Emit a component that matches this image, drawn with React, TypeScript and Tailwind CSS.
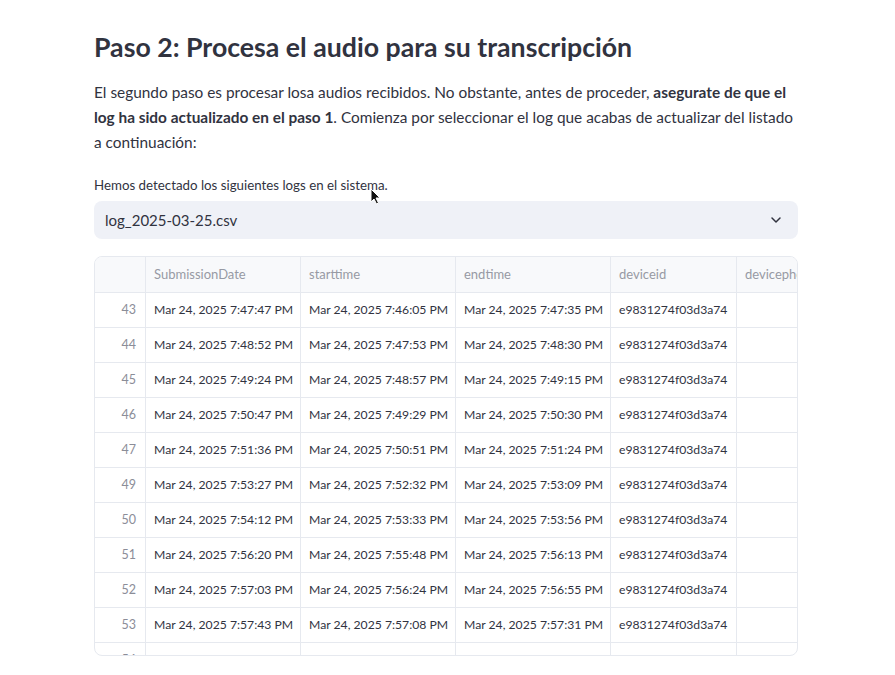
import { ChevronDown } from 'lucide-react';

interface Row {
  idx: number;
  submission: string;
  start: string;
  end: string;
  device: string;
}

const rows: Row[] = [
  { idx: 43, submission: '7:47:47', start: '7:46:05', end: '7:47:35', device: 'e9831274f03d3a74' },
  { idx: 44, submission: '7:48:52', start: '7:47:53', end: '7:48:30', device: 'e9831274f03d3a74' },
  { idx: 45, submission: '7:49:24', start: '7:48:57', end: '7:49:15', device: 'e9831274f03d3a74' },
  { idx: 46, submission: '7:50:47', start: '7:49:29', end: '7:50:30', device: 'e9831274f03d3a74' },
  { idx: 47, submission: '7:51:36', start: '7:50:51', end: '7:51:24', device: 'e9831274f03d3a74' },
  { idx: 49, submission: '7:53:27', start: '7:52:32', end: '7:53:09', device: 'e9831274f03d3a74' },
  { idx: 50, submission: '7:54:12', start: '7:53:33', end: '7:53:56', device: 'e9831274f03d3a74' },
  { idx: 51, submission: '7:56:20', start: '7:55:48', end: '7:56:13', device: 'e9831274f03d3a74' },
  { idx: 52, submission: '7:57:03', start: '7:56:24', end: '7:56:55', device: 'e9831274f03d3a74' },
  { idx: 53, submission: '7:57:43', start: '7:57:08', end: '7:57:31', device: 'e9831274f03d3a74' },
  { idx: 54, submission: '7:58:16', start: '7:57:48', end: '7:58:05', device: 'e9831274f03d3a74' },
];

const fmt = (t: string) => `Mar 24, 2025 ${t} PM`;

// column widths: index, SubmissionDate, starttime, endtime, deviceid, deviceph...
const cols = 'grid grid-cols-[51px_155px_155px_155px_126px_100px]';

export default function App() {
  return (
    <div className="relative min-h-[675px] bg-white text-[#31333f] font-['Lato','Noto_Sans',sans-serif]">
      <div className="ml-[94px] w-[704px] pt-[26px]">
        {/* Header */}
        <h2 className="text-[26.7px] font-bold leading-[42px] mb-[12px]">
          Paso 2: Procesa el audio para su transcripción
        </h2>

        <p className="text-[15.4px] leading-[25px] mb-[20px]">
          El segundo paso es procesar losa audios recibidos. No obstante, antes de proceder,{' '}
          <strong className="font-bold">asegurate de que el log ha sido actualizado en el paso 1</strong>. Comienza
          por seleccionar el log que acabas de actualizar del listado a continuación:
        </p>

        {/* Select */}
        <label className="block text-[13.3px] leading-[20px] mb-[6px]">Hemos detectado los siguientes logs en el sistema.</label>
        <div className="flex h-[38px] items-center justify-between rounded-lg bg-[#eff1f7] pl-[11px] pr-[14px]">
          <span className="text-[15px]">log_2025-03-25.csv</span>
          <ChevronDown className="h-4 w-4 text-[#31333f]" strokeWidth={2.25} />
        </div>

        {/* Dataframe */}
        <div className="mt-[17px] h-[400px] overflow-hidden rounded-lg border border-[#e6e9ef] text-[12.2px]">
          <div className={`${cols} h-[36px] bg-[#f8f9fb] text-[13px] text-[#979aa4] border-b border-[#e6e9ef]`}>
            <div className="border-r border-[#e6e9ef]" />
            <div className="flex items-center px-[8px] border-r border-[#e6e9ef]">SubmissionDate</div>
            <div className="flex items-center px-[8px] border-r border-[#e6e9ef]">starttime</div>
            <div className="flex items-center px-[8px] border-r border-[#e6e9ef]">endtime</div>
            <div className="flex items-center px-[8px] border-r border-[#e6e9ef]">deviceid</div>
            <div className="flex items-center px-[8px] whitespace-nowrap overflow-hidden">devicephone</div>
          </div>
          {rows.map((r) => (
            <div key={r.idx} className={`${cols} h-[35px] border-b border-[#e6e9ef]`}>
              <div className="flex items-center justify-end pr-[9px] text-[12.5px] text-[#8b8d98] border-r border-[#e6e9ef]">{r.idx}</div>
              <div className="flex items-center px-[8px] border-r border-[#e6e9ef] whitespace-nowrap">{fmt(r.submission)}</div>
              <div className="flex items-center px-[8px] border-r border-[#e6e9ef] whitespace-nowrap">{fmt(r.start)}</div>
              <div className="flex items-center px-[8px] border-r border-[#e6e9ef] whitespace-nowrap">{fmt(r.end)}</div>
              <div className="flex items-center px-[8px] border-r border-[#e6e9ef]">{r.device}</div>
              <div />
            </div>
          ))}
        </div>
      </div>

      {/* mouse pointer */}
      <svg className="absolute left-[370px] top-[188px]" width="11" height="17" viewBox="0 0 11 17">
        <path d="M1 1 L1 14 L4 11 L6.5 16 L8.5 15 L6 10 L10 10 Z" fill="#111" stroke="#fff" strokeWidth="1" />
      </svg>
    </div>
  );
}
